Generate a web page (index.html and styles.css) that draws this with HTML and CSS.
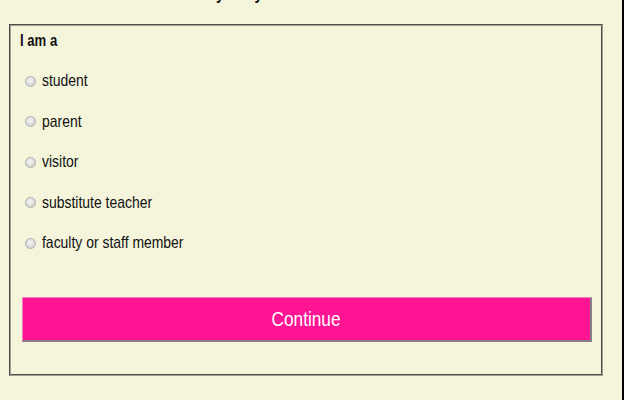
FILE: index.html
```html
<!DOCTYPE html>
<html>
<head>
<meta charset="utf-8">
<link rel="stylesheet" href="styles.css">
</head>
<body>
<div class="page">
  <div class="main">
    <h1 class="heading"><span class="txt">Why are you here?</span></h1>
    <form class="box">
      <div class="title"><span class="txt">I am a</span></div>
      <div class="options">
        <label class="opt"><input type="radio" name="role" class="radio"><span class="txt">student</span></label>
        <label class="opt"><input type="radio" name="role" class="radio"><span class="txt">parent</span></label>
        <label class="opt"><input type="radio" name="role" class="radio"><span class="txt">visitor</span></label>
        <label class="opt"><input type="radio" name="role" class="radio"><span class="txt">substitute teacher</span></label>
        <label class="opt"><input type="radio" name="role" class="radio"><span class="txt">faculty or staff member</span></label>
      </div>
      <button type="button" class="btn"><span class="txt txt-c">Continue</span></button>
    </form>
  </div>
  <div class="rule"></div>
  <div class="side"></div>
</div>
</body>
</html>
```
FILE: styles.css
```css
html, body {
  margin: 0;
  padding: 0;
  background: #ffffff;
  overflow: hidden;
}
.page {
  display: flex;
  width: 640px;
  height: 400px;
}
.main {
  width: 622px;
  flex: 0 0 622px;
  height: 400px;
  background: #f5f5dc;
  font-family: "Liberation Sans", Arial, sans-serif;
  color: #111;
  overflow: hidden;
}
.rule {
  flex: 0 0 2px;
  background: #000;
}
.side {
  flex: 1;
  background: #fff;
}
.txt {
  display: inline-block;
  white-space: nowrap;
  transform: scaleX(0.82);
  transform-origin: left center;
}
.txt-c {
  transform-origin: center center;
}
.heading {
  margin: -17px 0 0 193px;
  font-size: 18px;
  line-height: 20px;
  font-weight: bold;
  height: 20px;
}
.box {
  margin: 21px 0 0 9px;
  border: 2px groove #a0a098;
  padding: 5px 10px 32px 9px;
  box-sizing: content-box;
  width: 571px;
}
.title {
  font-weight: bold;
  font-size: 16px;
  line-height: 20px;
}
.options {
  display: flex;
  flex-direction: column;
  gap: 20.5px;
  margin-top: 20px;
  padding-left: 5px;
}
.opt {
  display: flex;
  align-items: center;
  height: 20px;
  font-size: 17px;
}
.radio {
  appearance: none;
  -webkit-appearance: none;
  width: 11px;
  height: 11px;
  margin: 0 6px 0 0;
  border-radius: 50%;
  border: 1px solid #b0b0b0;
  background: radial-gradient(circle at 45% 40%, #f6f6f6 0, #dedede 50%, #c6c6c6 100%);
  box-sizing: border-box;
}
.btn {
  display: block;
  margin: 44px 0 0 2px;
  width: 570px;
  height: 45px;
  background: #ff1493;
  border-style: solid;
  border-width: 1px 2px 2px 1px;
  border-color: #f080c0 #8a7f86 #8a7f86 #f080c0;
  color: #fff;
  font-family: "Liberation Sans", Arial, sans-serif;
  font-size: 21px;
  padding: 0;
}
```
